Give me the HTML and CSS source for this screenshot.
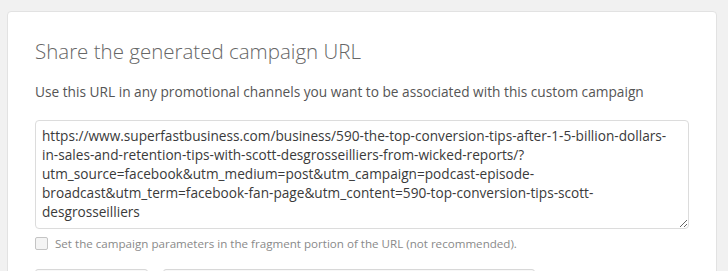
FILE: index.html
```html
<!DOCTYPE html>
<html>
<head>
<meta charset="utf-8">
<link rel="stylesheet" href="styles.css">
</head>
<body>
<div class="card">
  <h2 class="title">Share the generated campaign URL</h2>
  <p class="desc">Use this URL in any promotional channels you want to be associated with this custom campaign</p>
  <textarea class="url" readonly>https://www.superfastbusiness.com/business/590-the-top-conversion-tips-after-1-5-billion-dollars-in-sales-and-retention-tips-with-scott-desgrosseilliers-from-wicked-reports/?utm_source=facebook&amp;utm_medium=post&amp;utm_campaign=podcast-episode-broadcast&amp;utm_term=facebook-fan-page&amp;utm_content=590-top-conversion-tips-scott-desgrosseilliers</textarea>
  <label class="check"><span class="box"></span><span class="check-text">Set the campaign parameters in the fragment portion of the URL (not recommended).</span></label>
  <div class="buttons">
    <div class="btn btn-a"></div>
    <div class="btn btn-b"></div>
  </div>
</div>
</body>
</html>
```

FILE: styles.css
```css
html, body {
  margin: 0;
  padding: 0;
  background: #f1f1f1;
  height: 271px;
  overflow: hidden;
}
body {
  padding: 11px 11px 0 7px;
  font-family: "Open Sans", "Liberation Sans", sans-serif;
}
.card {
  width: 710px;
  background: #fff;
  border: 1px solid #e2e2e2;
  border-radius: 4px;
  padding: 26px 0 40px 27px;
  box-sizing: border-box;
}
.title {
  margin: 0;
  font-size: 20.5px;
  line-height: 26px;
  font-weight: 300;
  color: #666;
}
.desc {
  margin: 18px 0 0;
  font-size: 13.7px;
  line-height: 20px;
  color: #555;
}
.url {
  display: block;
  margin-top: 18px;
  width: 654px;
  height: 109px;
  box-sizing: border-box;
  padding: 5px 11px 7px 6px;
  border: 1px solid #dcdcdc;
  border-radius: 4px;
  font-family: "Open Sans", "Liberation Sans", sans-serif;
  font-size: 13.65px;
  line-height: 19px;
  color: #3a3a3a;
  resize: vertical;
  overflow: hidden;
  outline: none;
}
.check {
  display: flex;
  align-items: center;
  margin-top: 8px;
  height: 12px;
}
.box {
  width: 11px;
  height: 11px;
  border: 1px solid #c4c4c4;
  border-radius: 2px;
  background: #f4f4f4;
  flex: none;
}
.check-text {
  margin-left: 7px;
  font-size: 11.6px;
  color: #8a8a8a;
  white-space: nowrap;
}
.buttons {
  display: flex;
  gap: 15px;
  margin-top: 20px;
}
.btn {
  height: 30px;
  border: 1px solid #d8d8d8;
  border-radius: 3px;
  background: #f8f8f8;
  box-sizing: border-box;
}
.btn-a { width: 113px; }
.btn-b { width: 372px; }
```
